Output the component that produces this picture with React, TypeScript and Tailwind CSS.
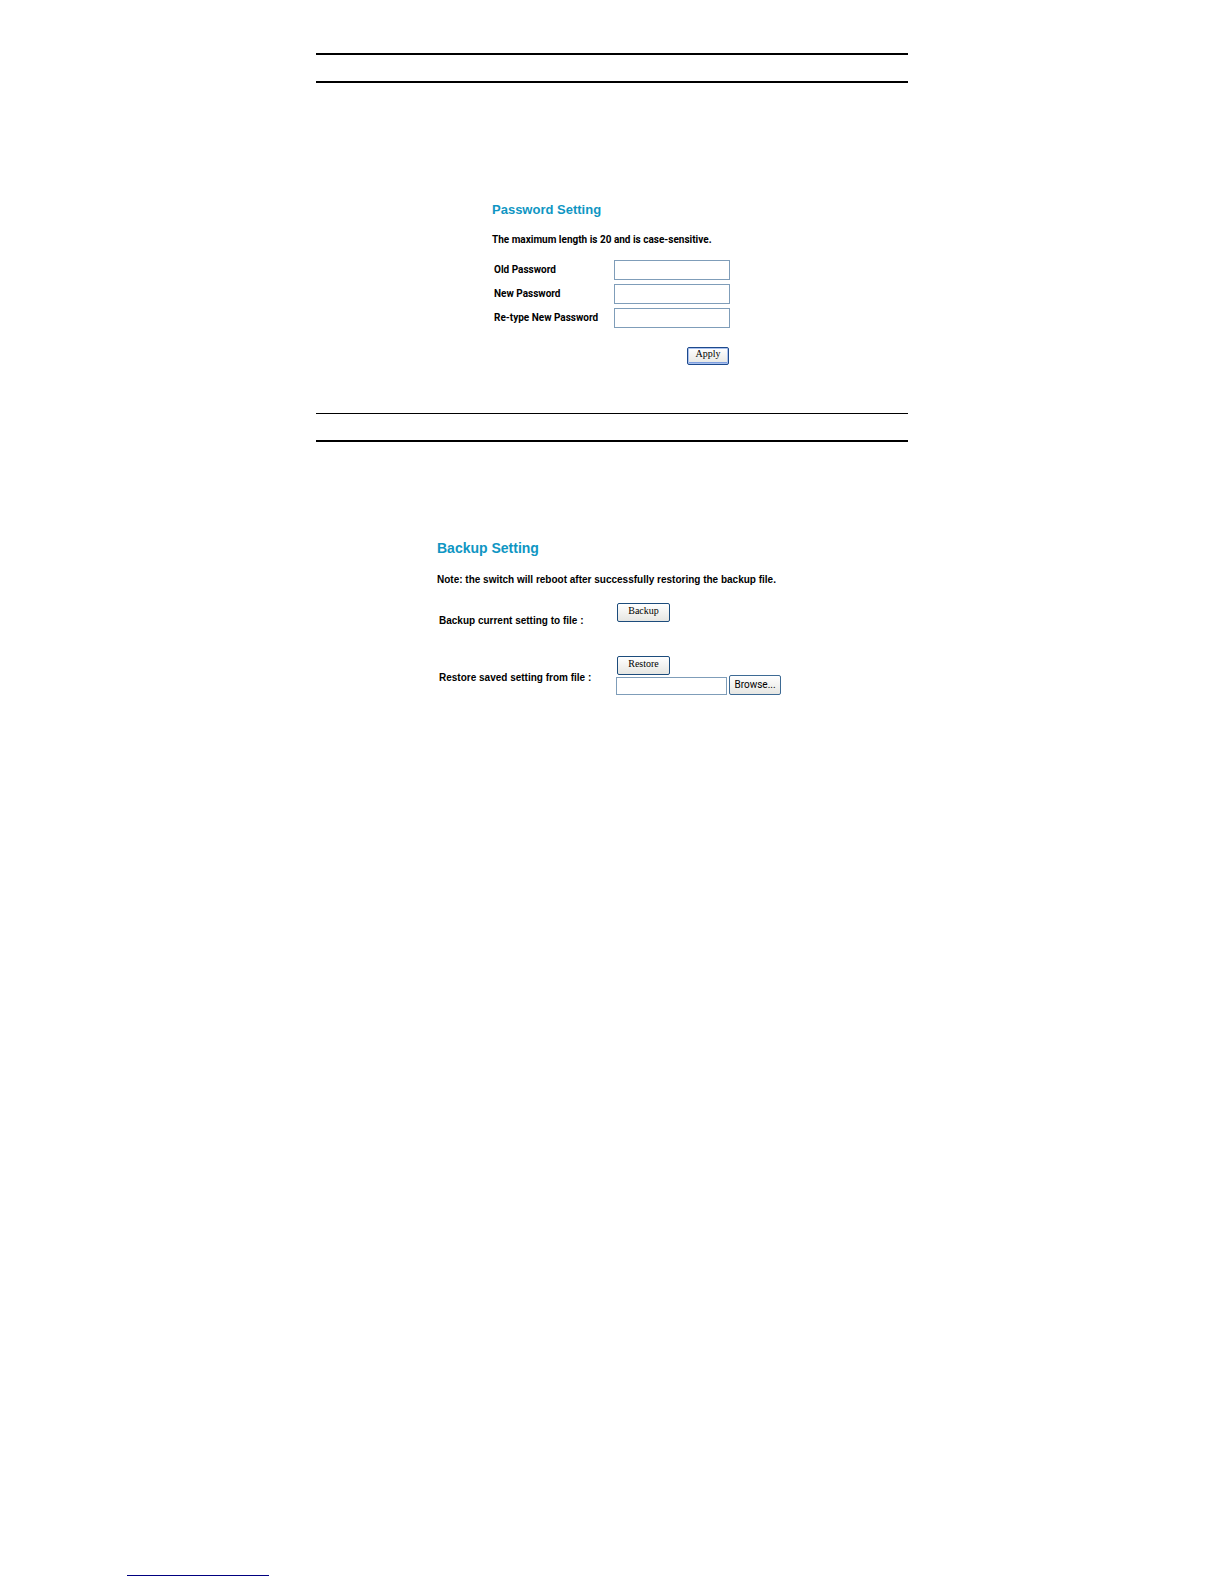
const field = 'block w-full border border-[#7f9db9] bg-white px-1 text-[10px] outline-none'
const xpButton =
  'flex items-center justify-center rounded-[2px] border bg-linear-to-b from-white to-[#e6e6e2] font-normal text-black'
const serifText = "pb-1 font-['Liberation_Serif','Times_New_Roman',serif] text-[10px] leading-3"

function PasswordRow({ id, label }: { id: string; label: string }) {
  return (
    <div className="flex items-center">
      <label htmlFor={id} className="w-[120px] whitespace-nowrap">
        {label}
      </label>
      <div className="w-[116px]">
        <input id={id} type="password" className={`${field} h-5`} />
      </div>
    </div>
  )
}

export default function App() {
  return (
    <div className="flex min-h-screen flex-col bg-white font-['Liberation_Sans',Arial,sans-serif] text-black">
      <main className="mx-auto w-full max-w-[592px] pt-[53px]">
        <hr className="border-t-2 border-black" />
        <hr className="mt-[26px] border-t-2 border-black" />

        <form className="mx-auto mt-[119px] w-[240px]" onSubmit={(e) => e.preventDefault()}>
          <h2 className="text-[13px] leading-4 font-bold text-[#0f96c3]">Password Setting</h2>
          <div className="font-['Roboto',Arial,sans-serif] text-[10px] leading-3 font-bold">
            <p className="mt-4 whitespace-nowrap">The maximum length is 20 and is case-sensitive.</p>
            <div className="mt-[14px] ml-[2px] flex flex-col gap-1">
              <PasswordRow id="old-password" label="Old Password" />
              <PasswordRow id="new-password" label="New Password" />
              <PasswordRow id="retype-password" label="Re-type New Password" />
            </div>
          </div>
          <div className="mt-[19px] flex justify-end pr-[3px]">
            <button
              type="submit"
              className={`${xpButton} ${serifText} h-[18px] w-[42px] border-[#1d4a8c] shadow-[inset_0_0_0_1px_#a9c0ee,inset_0_-2px_0_#7f9fdf]`}
            >
              Apply
            </button>
          </div>
        </form>

        <hr className="mt-12 border-t border-black" />
        <hr className="mt-[26px] border-t-2 border-black" />

        <form className="mx-auto mt-[98px] w-[350px]" onSubmit={(e) => e.preventDefault()}>
          <h2 className="text-[14px] leading-4 font-bold text-[#0f96c3]">Backup Setting</h2>
          <div className="text-[10px] leading-3 font-bold">
            <p className="mt-[18px] whitespace-nowrap">
              Note: the switch will reboot after successfully restoring the backup file.
            </p>
            <div className="mt-[17px] ml-[2px] flex items-end">
              <span id="backup-label" className="w-[178px] whitespace-nowrap">
                Backup current setting to file :
              </span>
              <button
                type="button"
                aria-describedby="backup-label"
                className={`${xpButton} ${serifText} mb-[5px] h-[19px] w-[53px] border-[#1c4c7c]`}
              >
                Backup
              </button>
            </div>
            <div className="mt-[29px] ml-[2px] flex items-center">
              <label htmlFor="restore-file" className="w-[177px] pt-1 whitespace-nowrap">
                Restore saved setting from file :
              </label>
              <div>
                <button
                  type="button"
                  className={`${xpButton} ${serifText} ml-px h-[19px] w-[53px] border-[#1c4c7c]`}
                >
                  Restore
                </button>
                <div className="flex items-end gap-[2px]">
                  <div className="w-[111px]">
                    <input id="restore-file" type="text" className={`${field} h-[18px]`} />
                  </div>
                  <button
                    type="button"
                    className={`${xpButton} h-5 w-[52px] border-[#3d6a94] font-['Liberation_Sans_Narrow','Roboto',sans-serif] text-[10px] leading-3`}
                  >
                    Browse...
                  </button>
                </div>
              </div>
            </div>
          </div>
        </form>
      </main>
      <footer className="mt-auto mb-2 pl-[127px]">
        <hr className="w-[142px] border-t border-[#000080]" />
      </footer>
    </div>
  )
}
